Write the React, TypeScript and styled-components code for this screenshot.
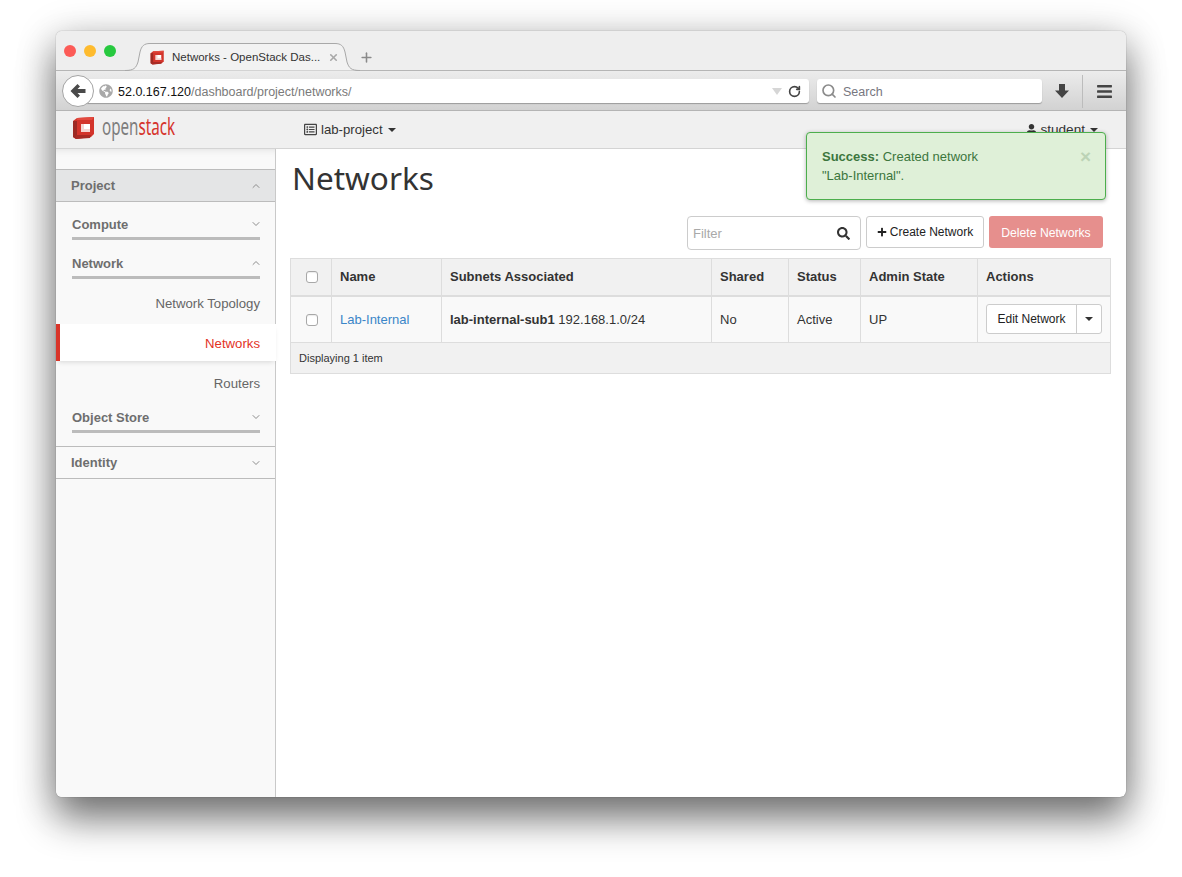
import React from 'react'
import styled, { createGlobalStyle } from 'styled-components'
import { FaBars, FaGlobeAmericas, FaPlus, FaRegListAlt, FaSearch, FaUser } from 'react-icons/fa'
import { LuChevronDown, LuChevronUp, LuPlus, LuRotateCw, LuSearch, LuX } from 'react-icons/lu'

const GlobalStyle = createGlobalStyle`
  html, body { margin: 0; padding: 0; background: #fff; }
  body { font-family: "Liberation Sans", Arial, sans-serif; font-size: 13px; color: #333; }
  * { box-sizing: border-box; }
`

const Page = styled.div`
  width: 1182px;
  height: 877px;
  padding: 31px 56px 80px;
  overflow: hidden;
`
const Win = styled.div`
  position: relative;
  width: 1070px;
  height: 766px;
  border-radius: 6px;
  background: #fff;
  display: flex;
  flex-direction: column;
  box-shadow: 0 0 1px rgba(0, 0, 0, 0.55), 0 22px 38px rgba(0, 0, 0, 0.48), 0 6px 40px rgba(0, 0, 0, 0.22);
`
const TabBar = styled.div`
  height: 40px;
  flex: none;
  display: flex;
  align-items: flex-end;
  padding-left: 8px;
  border-radius: 6px 6px 0 0;
  background: #eeeeee;
  border-bottom: 1px solid #b5b5b5;
`
const Lights = styled.div`
  display: flex;
  gap: 8px;
  align-self: flex-start;
  margin-top: 14px;
  width: 61px;
  flex: none;
`
const Light = styled.span<{ $c: string }>`
  width: 12px;
  height: 12px;
  border-radius: 50%;
  background: ${p => p.$c};
`
const Tab = styled.div`
  position: relative;
  width: 235px;
  height: 28px;
  flex: none;
  margin-bottom: -1px;
  display: flex;
  align-items: center;
  padding: 0 21px 0 25px;
  font-size: 11.5px;
  color: #333;
`
const TabShape = styled.svg`
  position: absolute;
  left: 0;
  top: 0;
`
const Favicon = styled.span`
  position: relative;
  display: flex;
`
const TabTitle = styled.span`
  position: relative;
  margin-left: 7px;
  flex: 1;
  white-space: nowrap;
`
const TabClose = styled.span`
  position: relative;
  display: flex;
  color: #a8a8a8;
`
const NewTab = styled.span`
  display: flex;
  color: #8a8a8a;
  margin: 0 0 5px -1px;
`
const ToolBar = styled.div`
  height: 40px;
  flex: none;
  display: flex;
  align-items: center;
  padding: 1px 0 0 6px;
  background: linear-gradient(#ececec, #d2d2d2);
  border-bottom: 1px solid #b4b4b4;
`
const BackButton = styled.div`
  position: relative;
  z-index: 1;
  width: 32px;
  height: 32px;
  flex: none;
  border-radius: 50%;
  background: #fff;
  border: 1px solid #a4a4a4;
  display: flex;
  align-items: center;
  justify-content: center;
  color: #4a4a4a;
`
const UrlBar = styled.div`
  width: 730px;
  height: 24px;
  flex: none;
  margin-left: -15px;
  padding: 0 8px 0 20px;
  display: flex;
  align-items: center;
  background: #fff;
  border-radius: 0 3px 3px 0;
  box-shadow: 0 1px 1px rgba(0, 0, 0, 0.28);
  font-size: 12.5px;
  color: #7a7a7a;
`
const Globe = styled.span`
  display: flex;
  color: #a9a9a9;
  font-size: 14px;
  margin-right: 5px;
`
const Host = styled.span`
  color: #111;
`
const UrlPath = styled.span`
  flex: 1;
  padding-top: 1px;
`
const DropMark = styled.span`
  width: 0;
  height: 0;
  margin-right: 6px;
  border-left: 5px solid transparent;
  border-right: 5px solid transparent;
  border-top: 7px solid #d6d6d6;
`
const Reload = styled.span`
  display: flex;
  color: #444;
`
const SearchBar = styled.div`
  width: 225px;
  height: 24px;
  flex: none;
  margin-left: 8px;
  padding-left: 4px;
  display: flex;
  align-items: center;
  gap: 6px;
  background: #fff;
  border-radius: 3px;
  box-shadow: 0 1px 1px rgba(0, 0, 0, 0.28);
  font-size: 12.5px;
  color: #77777f;
`
const SearchText = styled.span`
  padding-top: 1px;
`
const ToolIcon = styled.span<{ $w: number }>`
  width: ${p => p.$w}px;
  flex: none;
  display: flex;
  justify-content: center;
  color: #444;
`
const ToolDivider = styled.span`
  width: 1px;
  height: 33px;
  flex: none;
  background: #bcbcbc;
`
const TopNav = styled.div`
  height: 38px;
  flex: none;
  display: flex;
  align-items: center;
  padding-left: 16px;
  background: #f0f0f0;
  border-bottom: 1px solid #d4d4d4;
`
const Brand = styled.div`
  width: 232px;
  flex: none;
  display: flex;
  align-items: center;
  gap: 6px;
  margin-top: -4px;
`
const BrandText = styled.span`
  font-family: "Noto Sans", sans-serif;
  font-size: 23px;
  line-height: 26px;
  color: #7d7d7d;
  display: inline-block;
  width: 100px;
  margin-top: -3px;
  transform: scaleX(0.66);
  transform-origin: left center;
  b {
    font-weight: 400;
    color: #d6342c;
  }
`
const ProjectPicker = styled.div`
  display: flex;
  align-items: center;
  font-size: 13.2px;
  color: #333;
`
const PickIcon = styled.span`
  display: flex;
  font-size: 13px;
  margin-right: 4px;
  color: #444;
`
const Caret = styled.span`
  width: 0;
  height: 0;
  margin-left: 5px;
  border-left: 4px solid transparent;
  border-right: 4px solid transparent;
  border-top: 4px solid #333;
`
const UserMenu = styled(ProjectPicker)`
  margin-left: auto;
  margin-right: 28px;
  font-size: 13.6px;
`
const UserIcon = styled.span`
  display: flex;
  font-size: 11px;
  margin-right: 3px;
  color: #333;
`
const Body = styled.div`
  flex: 1;
  display: flex;
  min-height: 0;
`
const Sidebar = styled.nav`
  width: 220px;
  flex: none;
  padding-top: 20px;
  background: #f9f9f9;
  border-right: 1px solid #c9c9c9;
  border-radius: 0 0 0 6px;
  box-shadow: inset 0 8px 8px -8px rgba(0, 0, 0, 0.12);
`
const Dash = styled.div<{ $open?: boolean; $gap?: number }>`
  height: 33px;
  margin-top: ${p => p.$gap ?? 0}px;
  padding: 0 15px;
  display: flex;
  align-items: center;
  justify-content: space-between;
  font-size: 13px;
  font-weight: 700;
  color: #6e6e6e;
  background: ${p => (p.$open ? '#e4e5e6' : 'transparent')};
  border-top: 1px solid #bcbcbc;
  border-bottom: 1px solid #bcbcbc;
  svg {
    margin-right: -2px;
    color: #8c8c8c;
  }
`
const Panels = styled.div`
  padding: 0 15px 0 16px;
`
const Panel = styled.div<{ $h: number }>`
  height: ${p => p.$h}px;
  display: flex;
  align-items: flex-end;
  justify-content: space-between;
  font-size: 13px;
  line-height: 15px;
  font-weight: 700;
  color: #6e6e6e;
  border-bottom: 3px solid #bcbcbc;
  padding-bottom: 5px;
  svg {
    margin: 0 -2px 2px 0;
    color: #8c8c8c;
  }
`
const Links = styled.div`
  margin: 0 -15px 0 -16px;
`
const SideLink = styled.div<{ $h: number; $pad?: number }>`
  height: ${p => p.$h}px;
  padding: ${p => p.$pad ?? 0}px 15px 0 0;
  display: flex;
  align-items: center;
  justify-content: flex-end;
  font-size: 13.2px;
  color: #666;
`
const ActiveLink = styled(SideLink)`
  position: relative;
  margin-right: -1px;
  padding-right: 16px;
  color: #e3321f;
  background: #fff;
  border-left: 4px solid #d9352a;
  box-shadow: 0 3px 5px -2px rgba(0, 0, 0, 0.14);
`
const Main = styled.main`
  flex: 1;
  min-width: 0;
  padding: 0 15px 0 14px;
`
const Title = styled.h1`
  margin: 8px 0 0 2px;
  height: 59px;
  font-family: "Noto Sans", sans-serif;
  font-size: 31.5px;
  font-weight: 400;
  line-height: 42px;
  color: #333;
`
const Actions = styled.div`
  display: flex;
  justify-content: flex-end;
  align-items: flex-start;
  gap: 5px;
  padding-right: 8px;
  height: 42px;
`
const FilterBox = styled.div`
  width: 174px;
  height: 34px;
  display: flex;
  align-items: center;
  justify-content: space-between;
  padding: 0 10px 0 5px;
  border: 1px solid #ccc;
  border-radius: 4px;
  background: #fff;
  font-size: 13px;
  color: #a9a9a9;
  svg {
    color: #333;
    font-size: 13px;
  }
`
const CreateButton = styled.div`
  width: 118px;
  height: 32px;
  display: flex;
  align-items: center;
  justify-content: center;
  gap: 3px;
  border: 1px solid #ccc;
  border-radius: 3px;
  background: #fff;
  font-size: 12px;
  color: #222;
  svg {
    font-size: 10px;
  }
`
const DeleteButton = styled.div`
  width: 114px;
  height: 32px;
  padding-top: 1px;
  display: flex;
  align-items: center;
  justify-content: center;
  border-radius: 3px;
  background: #e68f8d;
  font-size: 12.2px;
  color: #fff;
`
const Table = styled.table`
  width: 820px;
  table-layout: fixed;
  border-collapse: collapse;
  font-size: 13px;
  color: #333;
  th, td {
    border: 1px solid #dddddd;
    padding: 0 8px;
    text-align: left;
    vertical-align: middle;
  }
  thead th {
    height: 37px;
    background: #f1f1f1;
    border-bottom-width: 2px;
    font-weight: 700;
  }
  tbody td {
    height: 47px;
    background: #f9f9f9;
  }
  tfoot td {
    height: 31px;
    background: #f1f1f1;
    font-size: 11px;
  }
`
const CheckCell = styled.span`
  display: block;
  width: 12px;
  height: 12px;
  margin: 1px 0 0 7px;
  border: 1px solid #a8a8a8;
  border-radius: 3px;
  background: #fff;
  box-shadow: inset 0 1px 1px rgba(0, 0, 0, 0.08);
`
const NameLink = styled.a`
  color: #3b86c8;
`
const SplitButton = styled.div`
  display: flex;
  width: 116px;
  height: 30px;
  border: 1px solid #ccc;
  border-radius: 3px;
  background: #fff;
  font-size: 12px;
  color: #222;
`
const SplitMain = styled.span`
  flex: 1;
  display: flex;
  align-items: center;
  justify-content: center;
  border-right: 1px solid #ccc;
`
const SplitCaret = styled.span`
  width: 24px;
  display: flex;
  align-items: center;
  justify-content: center;
  ${Caret} {
    margin: 0;
  }
`
const Toast = styled.div`
  position: absolute;
  left: 750px;
  top: 101px;
  width: 300px;
  height: 68px;
  padding: 14px 15px;
  display: flex;
  justify-content: space-between;
  border: 1px solid #4cae4c;
  border-radius: 4px;
  background: #dff0d8;
  color: #3c763d;
  font-size: 13px;
  line-height: 19px;
  box-shadow: 0 1px 4px rgba(0, 0, 0, 0.3);
`
const ToastText = styled.div`
  width: 190px;
`
const ToastClose = styled.span`
  font-size: 19px;
  line-height: 15px;
  font-weight: 700;
  color: #bcd3b6;
  margin: 2px -1px 0 0;
`

const Cube = ({ size }: { size: number }) => (
  <svg width={size} height={size} viewBox="0 0 24 24">
    <path d="M5 2 22 1v17l-3 3-15 2-3-2V5z" fill="#d3342b" />
    <path d="M1 5h4v14l-1 4-3-2z" fill="#9d2a24" />
    <path d="M4 19h15l-1 3-14 1z" fill="#a82a24" />
    <path d="M9 8h9v8H9z" fill="#fff" />
    <path d="M9 8h3v5h6v3H9z" fill="#f5d5d2" />
    <path d="M5 2 22 1l-2 3H5z" fill="#e24a3f" />
  </svg>
)

const App = () => {
  return (
    <Page>
      <GlobalStyle />
      <Win>
        <TabBar>
          <Lights>
            <Light $c="#fc5b57" />
            <Light $c="#febb2e" />
            <Light $c="#27c93f" />
          </Lights>
          <Tab>
            <TabShape width="235" height="28" viewBox="0 0 235 28">
              <path d="M0 27.500C9 27.500 11 25 13 19L15 9C16.500 3 19 .5 25 .5H210C216 .5 218.500 3 220 9L222 19C224 25 226 27.500 235 27.500" fill="#f2f2f2" stroke="#a8a8a8" />
            </TabShape>
            <Favicon><Cube size={15} /></Favicon>
            <TabTitle>Networks - OpenStack Das...</TabTitle>
            <TabClose><LuX size={11} strokeWidth={3.5} /></TabClose>
          </Tab>
          <NewTab><LuPlus size={15} strokeWidth={2.5} /></NewTab>
        </TabBar>
        <ToolBar>
          <BackButton>
            <svg width="16" height="16" viewBox="0 0 16 16">
              <path d="M0.500 8 7.500 1 10 3.500 7.500 6H15.500V10H7.500L10 12.500 7.500 15z" fill="currentColor" />
            </svg>
          </BackButton>
          <UrlBar>
            <Globe><FaGlobeAmericas /></Globe>
            <UrlPath><Host>52.0.167.120</Host>/dashboard/project/networks/</UrlPath>
            <DropMark />
            <Reload><LuRotateCw size={13} strokeWidth={3} /></Reload>
          </UrlBar>
          <SearchBar>
            <LuSearch size={16} color="#8b8b8b" strokeWidth={2.5} />
            <SearchText>Search</SearchText>
          </SearchBar>
          <ToolIcon $w={40}>
            <svg width="16" height="16" viewBox="0 0 16 16">
              <path d="M5 1h6v6.500h4L8 15 1 7.500h4z" fill="currentColor" />
            </svg>
          </ToolIcon>
          <ToolDivider />
          <ToolIcon $w={43}><FaBars size={17} /></ToolIcon>
        </ToolBar>
        <TopNav>
          <Brand>
            <Cube size={24} />
            <BrandText>open<b>stack</b></BrandText>
          </Brand>
          <ProjectPicker>
            <PickIcon><FaRegListAlt /></PickIcon>
            lab-project
            <Caret />
          </ProjectPicker>
          <UserMenu>
            <UserIcon><FaUser /></UserIcon>
            student
            <Caret />
          </UserMenu>
        </TopNav>
        <Body>
          <Sidebar>
            <Dash $open>Project <LuChevronUp size={12} /></Dash>
            <Panels>
              <Panel $h={38}>Compute <LuChevronDown size={12} /></Panel>
              <Panel $h={39}>Network <LuChevronUp size={12} /></Panel>
              <Links>
                <SideLink $h={45} $pad={3}>Network Topology</SideLink>
                <ActiveLink $h={37} $pad={1}>Networks</ActiveLink>
                <SideLink $h={44}>Routers</SideLink>
              </Links>
              <Panel $h={28}>Object Store <LuChevronDown size={12} /></Panel>
            </Panels>
            <Dash $gap={13}>Identity <LuChevronDown size={12} /></Dash>
          </Sidebar>
          <Main>
            <Title>Networks</Title>
            <Actions>
              <FilterBox>Filter <FaSearch /></FilterBox>
              <CreateButton><FaPlus /> Create Network</CreateButton>
              <DeleteButton>Delete Networks</DeleteButton>
            </Actions>
            <Table>
              <colgroup>
                <col width={41} />
                <col width={110} />
                <col width={270} />
                <col width={77} />
                <col width={72} />
                <col width={117} />
                <col width={133} />
              </colgroup>
              <thead>
                <tr>
                  <th><CheckCell /></th>
                  <th>Name</th>
                  <th>Subnets Associated</th>
                  <th>Shared</th>
                  <th>Status</th>
                  <th>Admin State</th>
                  <th>Actions</th>
                </tr>
              </thead>
              <tbody>
                <tr>
                  <td><CheckCell /></td>
                  <td><NameLink>Lab-Internal</NameLink></td>
                  <td><b>lab-internal-sub1</b> 192.168.1.0/24</td>
                  <td>No</td>
                  <td>Active</td>
                  <td>UP</td>
                  <td>
                    <SplitButton>
                      <SplitMain>Edit Network</SplitMain>
                      <SplitCaret><Caret /></SplitCaret>
                    </SplitButton>
                  </td>
                </tr>
              </tbody>
              <tfoot>
                <tr>
                  <td colSpan={7}>Displaying 1 item</td>
                </tr>
              </tfoot>
            </Table>
          </Main>
        </Body>
        <Toast>
          <ToastText><b>Success:</b> Created network "Lab-Internal".</ToastText>
          <ToastClose>×</ToastClose>
        </Toast>
      </Win>
    </Page>
  )
}

export default App
